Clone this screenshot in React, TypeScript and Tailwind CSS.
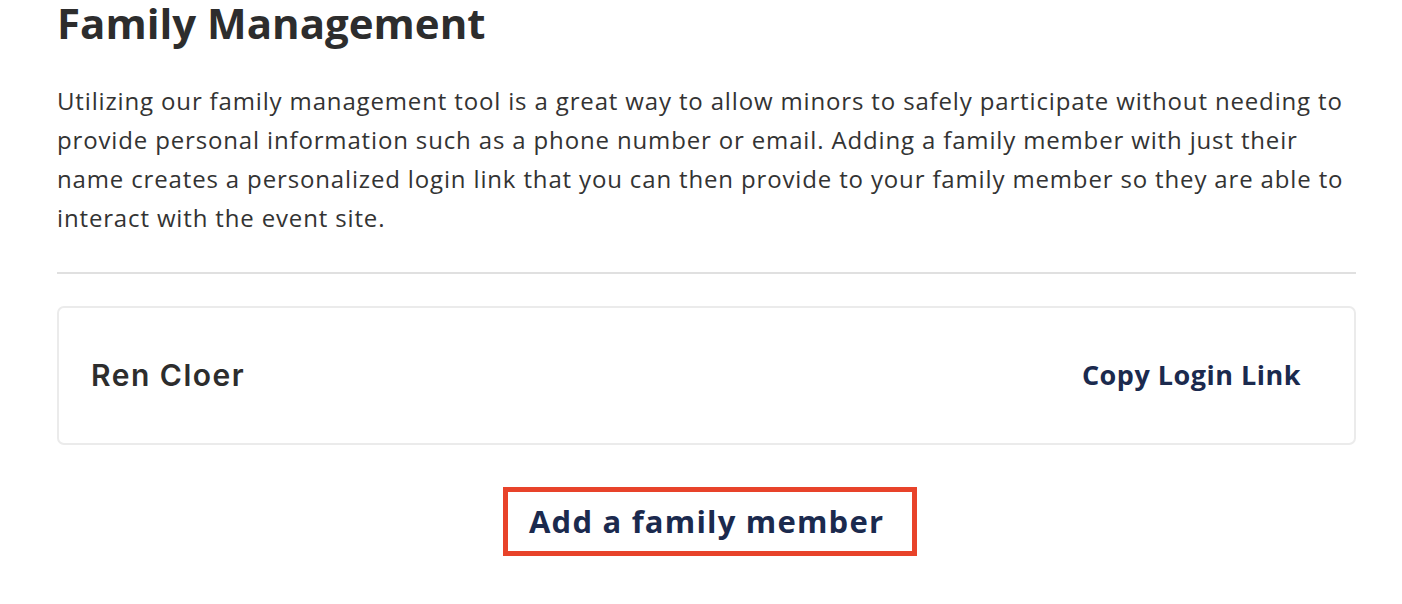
import React from "react";

export default function App() {
  return (
    <div className="w-[1402px] h-[604px] bg-white overflow-hidden" style={{ fontFamily: '"Open Sans", "Liberation Sans", sans-serif' }}>
      <div className="ml-[57px] w-[1299px] flex flex-col">
        <h1 className="text-[42px] leading-[46px] font-bold text-[#2d2d2d] mt-0">Family Management</h1>
        <p className="mt-[35px] text-[24px] leading-[39px] text-[#333333] tracking-[0.85px] whitespace-nowrap">
          Utilizing our family management tool is a great way to allow minors to safely participate without needing to
          <br />
          provide personal information such as a phone number or email. Adding a family member with just their
          <br />
          name creates a personalized login link that you can then provide to your family member so they are able to
          <br />
          interact with the event site.
        </p>
        <div className="mt-[35px] h-[2px] bg-[#e0e0e0]" />
        <div className="mt-[32px] h-[139px] border-2 border-[#ebebeb] rounded-[7px] flex items-center justify-between pl-[32px] pr-[53px]">
          <span className="text-[30px] font-semibold text-[#2d2d2d] tracking-[1.5px]" style={{ fontFamily: 'Inter, sans-serif' }}>Ren Cloer</span>
          <button className="text-[27px] font-bold text-[#1b2a4e] tracking-[0.5px]">Copy Login Link</button>
        </div>
        <div className="mt-[42px] flex justify-center">
          <button className="ml-[7px] h-[69px] w-[414px] border-[5px] border-[#e8432a] flex items-center pl-[21px] text-[31px] font-bold text-[#1b2a4e] tracking-[1.2px]">
            Add a family member
          </button>
        </div>
      </div>
    </div>
  );
}
